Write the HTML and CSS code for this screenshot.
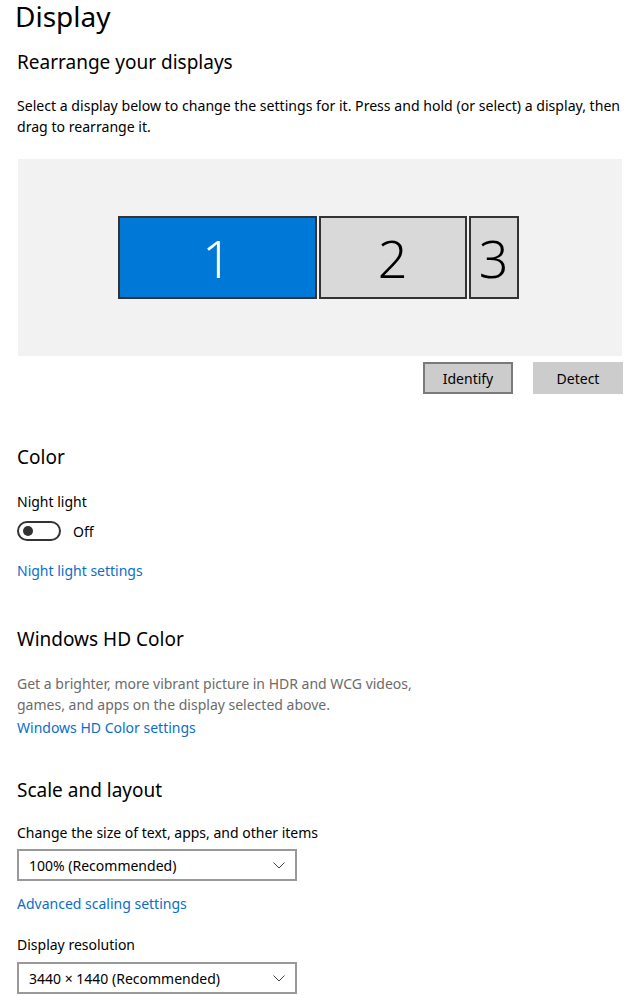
FILE: index.html
```html
<!DOCTYPE html>
<html>
<head>
<meta charset="utf-8">
<link rel="stylesheet" href="styles.css">
</head>
<body>
<div class="page">
  <h1 class="title">Display</h1>
  <h2 class="h2 first">Rearrange your displays</h2>
  <p class="para">Select a display below to change the settings for it. Press and hold (or select) a display, then drag to rearrange it.</p>
  <div class="arrange">
    <div class="mon mon1">1</div>
    <div class="mon mon2">2</div>
    <div class="mon mon3">3</div>
  </div>
  <div class="btnrow">
    <div class="btn btn-focus">Identify</div>
    <div class="btn">Detect</div>
  </div>

  <h2 class="h2 color">Color</h2>
  <div class="label nl">Night light</div>
  <div class="toggle-row">
    <div class="toggle"><div class="knob"></div></div>
    <span class="toggle-text">Off</span>
  </div>
  <a class="link nls">Night light settings</a>

  <h2 class="h2 hd">Windows HD Color</h2>
  <p class="grey">Get a brighter, more vibrant picture in HDR and WCG videos, games, and apps on the display selected above.</p>
  <a class="link hdl">Windows HD Color settings</a>

  <h2 class="h2 scale">Scale and layout</h2>
  <div class="label cs">Change the size of text, apps, and other items</div>
  <div class="select">
    <span>100% (Recommended)</span>
    <svg class="chev" width="12" height="7" viewBox="0 0 12 7"><path d="M0.5 0.5 L6 6 L11.5 0.5" fill="none" stroke="#444" stroke-width="1"/></svg>
  </div>
  <a class="link adv">Advanced scaling settings</a>
  <div class="label dr">Display resolution</div>
  <div class="select sel2">
    <span>3440 × 1440 (Recommended)</span>
    <svg class="chev" width="12" height="7" viewBox="0 0 12 7"><path d="M0.5 0.5 L6 6 L11.5 0.5" fill="none" stroke="#444" stroke-width="1"/></svg>
  </div>
</div>
</body>
</html>
```
FILE: styles.css
```css
html, body {
  margin: 0;
  padding: 0;
  background: #ffffff;
}
body {
  font-family: "Noto Sans", "Open Sans", sans-serif;
  color: #000;
  font-size: 14px;
}
.page {
  padding-left: 17px;
  width: 607px;
  overflow: hidden;
  height: 996px;
}
.title {
  font-weight: 400;
  font-size: 28px;
  line-height: 30px;
  margin: 0 0 0 -2px;
  padding-top: 1px;
}
.h2 {
  font-weight: 400;
  font-size: 19px;
  line-height: 26px;
  margin: 0;
}
.first { margin-top: 18px; }
.para {
  margin: 20px 0 0 0;
  line-height: 21px;
  font-size: 14.1px;
}
.arrange {
  margin-top: 22px;
  margin-left: 1px;
  width: 604px;
  height: 197px;
  background: #f2f2f2;
  display: flex;
  justify-content: center;
  align-items: center;
  gap: 2px;
  padding-right: 4px;
  box-sizing: border-box;
}
.mon {
  height: 83px;
  box-sizing: border-box;
  border: 2px solid #333333;
  display: flex;
  align-items: center;
  justify-content: center;
  font-size: 52px;
  font-weight: 300;
  background: #d9d9d9;
  color: #000;
}
.mon1 { width: 199px; background: #0078d7; color: #fff; }
.mon2 { width: 148px; }
.mon3 { width: 50px; }
.btnrow {
  display: flex;
  justify-content: flex-end;
  gap: 20px;
  margin-top: 6px;
  margin-right: 1px;
}
.btn {
  width: 90px;
  height: 32px;
  box-sizing: border-box;
  background: #cccccc;
  display: flex;
  align-items: center;
  justify-content: center;
  font-size: 14px;
}
.btn-focus { border: 2px solid #7a7a7a; }
.color { margin-top: 50px; }
.label { line-height: 20px; }
.nl { margin-top: 22px; }
.toggle-row {
  display: flex;
  align-items: center;
  margin-top: 9px;
}
.toggle {
  width: 44px;
  height: 20px;
  box-sizing: border-box;
  border: 2px solid #333;
  border-radius: 10px;
  position: relative;
}
.knob {
  position: absolute;
  left: 4px;
  top: 3px;
  width: 10px;
  height: 10px;
  border-radius: 50%;
  background: #333;
}
.toggle-text { margin-left: 12px; }
.link {
  display: block;
  color: #0a6ec9;
  line-height: 20px;
}
.nls { margin-top: 20px; }
.hd { margin-top: 45px; }
.grey {
  margin: 21px 0 0 0;
  color: #6b6b6b;
  line-height: 21px;
  width: 420px;
}
.hdl { margin-top: 3px; }
.scale { margin-top: 39px; }
.cs { margin-top: 20px; }
.select {
  margin-top: 6px;
  width: 280px;
  height: 32px;
  box-sizing: border-box;
  border: 2px solid #999999;
  display: flex;
  align-items: center;
  justify-content: space-between;
  padding: 0 10px 0 10px;
}
.adv { margin-top: 13px; }
.dr { margin-top: 21px; }
.sel2 { margin-top: 7px; }
```
